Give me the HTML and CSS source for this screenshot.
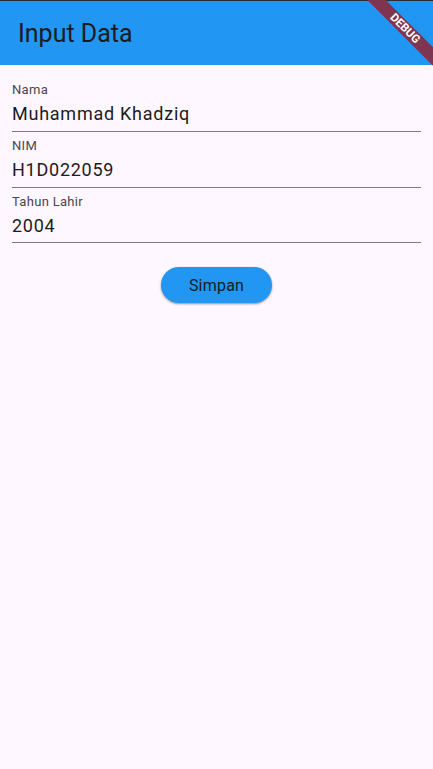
FILE: index.html
```html
<!DOCTYPE html>
<html>
<head>
<meta charset="utf-8">
<link rel="stylesheet" href="styles.css">
</head>
<body>
<div class="screen">
  <header class="appbar">
    <h1 class="title">Input Data</h1>
    <div class="banner"><span>DEBUG</span></div>
  </header>
  <main class="form">
    <div class="field">
      <span class="label">Nama</span>
      <span class="value">Muhammad Khadziq</span>
    </div>
    <div class="field">
      <span class="label">NIM</span>
      <span class="value">H1D022059</span>
    </div>
    <div class="field field-last">
      <span class="label">Tahun Lahir</span>
      <span class="value">2004</span>
    </div>
    <div class="actions">
      <button class="btn">Simpan</button>
    </div>
  </main>
</div>
</body>
</html>
```
FILE: styles.css
```css
html, body {
  margin: 0;
  padding: 0;
  height: 100%;
}
body {
  background: #FEF7FF;
  font-family: Roboto, "Noto Sans", sans-serif;
  color: #1D1B20;
  overflow: hidden;
}
.screen {
  height: 769px;
  position: relative;
  overflow: hidden;
}
.appbar {
  height: 64px;
  border-top: 1px solid #2b2f33;
  background: #2196F3;
  display: flex;
  align-items: center;
  padding-left: 18px;
  position: relative;
}
.title {
  margin: 0;
  font-size: 25px;
  font-weight: 400;
  color: #1D1B20;
  line-height: 1;
}
.banner {
  position: absolute;
  left: 404.7px;
  top: 27.3px;
  width: 0;
  height: 0;
}
.banner span {
  position: absolute;
  left: -70px;
  top: -6.5px;
  width: 140px;
  height: 13px;
  background: #7F3450;
  transform: rotate(45deg);
  color: #fff;
  font-weight: 700;
  font-size: 11.5px;
  line-height: 13px;
  text-align: center;
}
.form {
  padding: 11px 12px 0;
  display: flex;
  flex-direction: column;
}
.field {
  display: flex;
  flex-direction: column;
  border-bottom: 1px solid #7d7a80;
  height: 56px;
  box-sizing: border-box;
  padding-top: 6px;
}
.field-last {
  height: 55px;
}
.label {
  font-size: 13px;
  line-height: 16px;
  color: #49454F;
  letter-spacing: 0.3px;
}
.value {
  font-size: 18px;
  line-height: 22px;
  letter-spacing: 0.75px;
  color: #1D1B20;
  margin-top: 5px;
}
.actions {
  display: flex;
  justify-content: center;
  padding-top: 24px;
}
.btn {
  height: 36px;
  width: 111px;
  border: none;
  border-radius: 18px;
  background: #2196F3;
  color: #1D1B20;
  font-family: Roboto, sans-serif;
  font-size: 16px;
  letter-spacing: 0.2px;
  box-shadow: 0 1px 2px rgba(0,0,0,0.3), 0 1px 3px rgba(0,0,0,0.15);
  padding: 0;
}
```
